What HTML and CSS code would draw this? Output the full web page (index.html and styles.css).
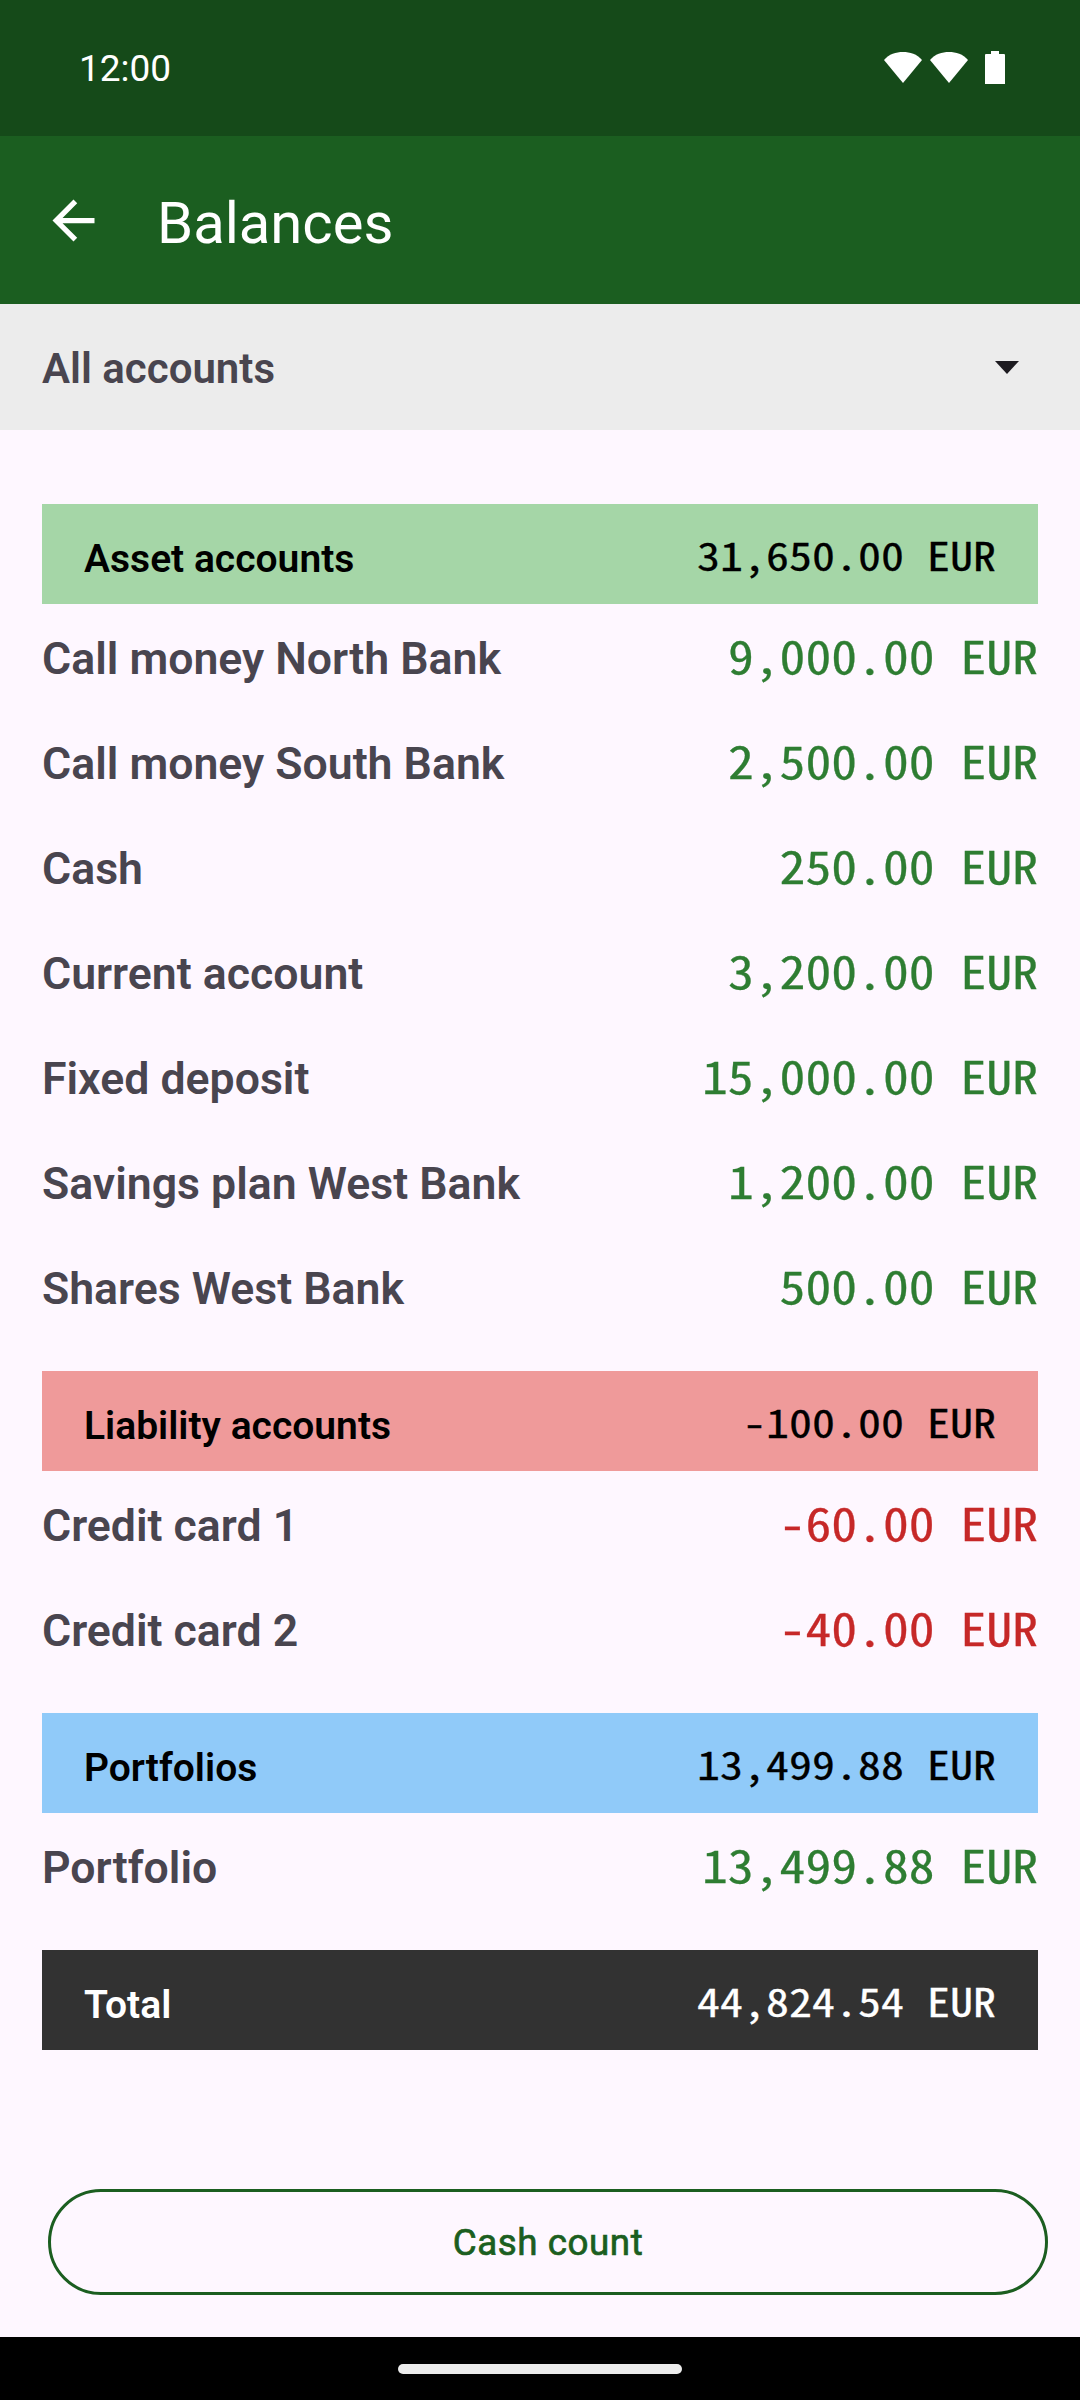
FILE: index.html
```html
<!DOCTYPE html>
<html lang="en">
<head>
<meta charset="utf-8">
<title>Balances</title>
<link rel="stylesheet" href="styles.css">
</head>
<body>
<div class="status-bar">
  <span class="clock">12:00</span>
  <div class="status-icons">
    <svg class="wifi" viewBox="0 0 40 32"><path d="M20 32 1 9C6 3 13 1 20 1s14 2 19 8z"/></svg>
    <svg class="wifi" viewBox="0 0 40 32"><path d="M20 32 1 9C6 3 13 1 20 1s14 2 19 8z"/></svg>
    <svg class="battery" viewBox="0 0 20 33"><path d="M6 0h8v3h5a1 1 0 0 1 1 1v29H0V4a1 1 0 0 1 1-1h5z"/></svg>
  </div>
</div>
<header class="app-bar">
  <svg class="back" viewBox="0 0 24 24"><path d="M20 11H7.83l5.59-5.59L12 4l-8 8 8 8 1.41-1.41L7.83 13H20v-2z"/></svg>
  <h1 class="title">Balances</h1>
</header>
<div class="spinner">
  <span class="spinner-label">All accounts</span>
  <span class="caret"></span>
</div>
<main class="content">
  <section class="group">
    <div class="head head-asset"><span>Asset accounts</span><span class="mono">31,650.00 EUR</span></div>
    <div class="row"><span>Call money North Bank</span><span class="mono pos">9,000.00 EUR</span></div>
    <div class="row"><span>Call money South Bank</span><span class="mono pos">2,500.00 EUR</span></div>
    <div class="row"><span>Cash</span><span class="mono pos">250.00 EUR</span></div>
    <div class="row"><span>Current account</span><span class="mono pos">3,200.00 EUR</span></div>
    <div class="row"><span>Fixed deposit</span><span class="mono pos">15,000.00 EUR</span></div>
    <div class="row"><span>Savings plan West Bank</span><span class="mono pos">1,200.00 EUR</span></div>
    <div class="row"><span>Shares West Bank</span><span class="mono pos">500.00 EUR</span></div>
  </section>
  <section class="group">
    <div class="head head-liability"><span>Liability accounts</span><span class="mono">-100.00 EUR</span></div>
    <div class="row"><span>Credit card 1</span><span class="mono neg">-60.00 EUR</span></div>
    <div class="row"><span>Credit card 2</span><span class="mono neg">-40.00 EUR</span></div>
  </section>
  <section class="group">
    <div class="head head-portfolio"><span>Portfolios</span><span class="mono">13,499.88 EUR</span></div>
    <div class="row"><span>Portfolio</span><span class="mono pos">13,499.88 EUR</span></div>
  </section>
  <div class="head head-total"><span>Total</span><span class="mono">44,824.54 EUR</span></div>
</main>
<div class="actions"><button class="cash-btn">Cash count</button></div>
<div class="nav-bar"><span class="handle"></span></div>
</body>
</html>
```
FILE: styles.css
```css
* { box-sizing: border-box; }
html, body { margin: 0; padding: 0; }
body {
  width: 1080px;
  height: 2400px;
  display: flex;
  flex-direction: column;
  background: #fef7ff;
  font-family: Roboto, sans-serif;
  overflow: hidden;
}
.status-bar {
  height: 136px;
  background: #154a19;
  display: flex;
  align-items: center;
  justify-content: space-between;
  padding: 0 75px 2px 79px;
  color: #fff;
}
.clock { font-size: 37px; margin-top: 2px; }
.status-icons { display: flex; align-items: center; gap: 6px; }
.status-icons svg { fill: #fff; display: block; }
.wifi { width: 40px; height: 32px; }
.battery { width: 20px; height: 33px; margin-left: 10px; }
.app-bar {
  height: 168px;
  background: #1b5e20;
  display: flex;
  align-items: center;
  padding-left: 42px;
  color: #fff;
}
.back { width: 63px; height: 63px; fill: #fff; }
.title { margin: 6px 0 0 52px; font-size: 58px; font-weight: 400; }
.spinner {
  height: 126px;
  background: #ececec;
  display: flex;
  align-items: center;
  justify-content: space-between;
  padding: 0 42px;
  color: #49454f;
}
.spinner-label { font-size: 42px; font-weight: 600; margin-top: 2px; }
.caret {
  width: 0; height: 0;
  margin-right: 19px;
  border-left: 12.5px solid transparent;
  border-right: 12.5px solid transparent;
  border-top: 13px solid #1d1b20;
}
.content { flex: 1; padding: 74px 42px 0; display: flex; flex-direction: column; gap: 32px; }
.head {
  height: 100px;
  padding: 9px 42px 0;
  display: flex;
  align-items: center;
  justify-content: space-between;
  font-size: 39px;
  font-weight: 600;
  color: #000;
}
.head-asset { background: #a5d6a7; }
.head-liability { background: #ef9a9a; }
.head-portfolio { background: #90caf9; }
.head-total { background: #323232; color: #fff; }
.mono {
  font-family: "Noto Sans Mono CJK SC", "DejaVu Sans Mono", monospace;
  font-weight: 400;
  white-space: pre;
  margin-bottom: 8px;
  -webkit-text-stroke: 0.3px currentColor;
}
.head .mono { font-size: 46px; transform: scaleY(0.86); margin-bottom: 9px; }
.row {
  height: 105px;
  padding-top: 4px;
  display: flex;
  align-items: center;
  justify-content: space-between;
  font-size: 44.625px;
  font-weight: 600;
  color: #49454f;
}
.row .mono { font-size: 51.7px; transform: scaleY(0.87); }
.pos { color: #2e7d32; }
.neg { color: #c62828; }
.actions { padding: 0 32px 42px 48px; }
.cash-btn {
  width: 1000px;
  height: 106px;
  padding-top: 2px;
  border: 3px solid #1b5e20;
  border-radius: 53px;
  background: transparent;
  color: #1b5e20;
  font: 400 36.75px Roboto, sans-serif;
  letter-spacing: 0.55px;
  -webkit-text-stroke: 0.7px currentColor;
}
.nav-bar { height: 63px; background: #000; display: flex; justify-content: center; padding-top: 27px; }
.handle { width: 284px; height: 10px; border-radius: 5px; background: #ececec; }
```
